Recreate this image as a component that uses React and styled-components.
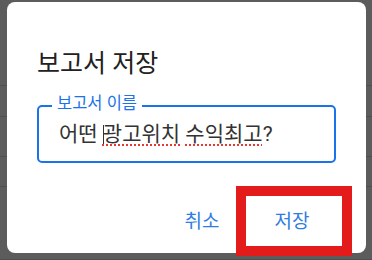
import styled, { createGlobalStyle } from "styled-components";

const GlobalStyle = createGlobalStyle`
  html, body {
    margin: 0;
    padding: 0;
    background: #5c5c5c;
  }
  body {
    font-family: Roboto, "Noto Sans CJK KR", "Noto Sans", sans-serif;
  }
`;

// 뒤쪽 페이지 (딤 처리된 상태)
const Page = styled.div`
  position: relative;
  width: 372px;
  height: 260px;
  overflow: hidden;
  background: #5c5c5c;
`;

const BackRow = styled.div`
  height: ${(props) => props.$h}px;
  box-sizing: border-box;
  border-bottom: 1px solid #4f4f4f;
`;

const Dialog = styled.div`
  position: absolute;
  top: 2px;
  left: 7px;
  width: 359px;
  height: 251px;
  box-sizing: border-box;
  background: #ffffff;
  border-radius: 8px;
  padding: 46px 30px 7px 30px;
  display: flex;
  flex-direction: column;
`;

const Title = styled.h2`
  margin: 0;
  font-size: 25px;
  line-height: 32px;
  font-weight: 400;
  color: #212121;
`;

const Field = styled.div`
  position: relative;
  margin-top: 25px;
  height: 58px;
  box-sizing: border-box;
  border: 2px solid #1a73e8;
  border-radius: 5px;
  display: flex;
  align-items: center;
  padding: 0 20px;
`;

const FieldLabel = styled.span`
  position: absolute;
  top: -13px;
  left: 13px;
  padding: 0 5px;
  background: #ffffff;
  font-size: 16.5px;
  line-height: 20px;
  color: #1a73e8;
`;

const InputText = styled.div`
  font-size: 21px;
  line-height: 26px;
  color: #333333;
  white-space: nowrap;
`;

const Misspelled = styled.span`
  text-decoration: underline dotted #e53935;
  text-decoration-thickness: 2px;
  text-underline-offset: 3px;
`;

const Caret = styled.span`
  display: inline-block;
  width: 1px;
  height: 19px;
  margin-right: -1px;
  vertical-align: -3px;
  background: #333333;
`;

const Actions = styled.div`
  margin-top: 33px;
  margin-right: -6px;
  display: flex;
  justify-content: flex-end;
  gap: 12px;
`;

const ActionButton = styled.button`
  width: ${(props) => (props.$highlight ? 96 : 64)}px;
  height: 50px;
  border: none;
  background: #ffffff;
  font-family: inherit;
  font-size: 19px;
  color: #2f7de1;
  cursor: pointer;
  padding: 0 ${(props) => (props.$highlight ? 4 : 0)}px 4px 0;
  outline: ${(props) => (props.$highlight ? "10px solid #e41b1b" : "none")};
`;

const App = () => {
  const rows = [86, 31, 40, 30, 73];

  return (
    <Page>
      <GlobalStyle />
      {rows.map((h, i) => (
        <BackRow key={i} $h={h} />
      ))}
      <Dialog>
        <Title>보고서 저장</Title>
        <Field>
          <FieldLabel>보고서 이름</FieldLabel>
          <InputText>
            어떤 <Caret />
            <Misspelled>광고위치</Misspelled> <Misspelled>수익최고</Misspelled>?
          </InputText>
        </Field>
        <Actions>
          <ActionButton>취소</ActionButton>
          <ActionButton $highlight>저장</ActionButton>
        </Actions>
      </Dialog>
    </Page>
  );
};

export default App;
